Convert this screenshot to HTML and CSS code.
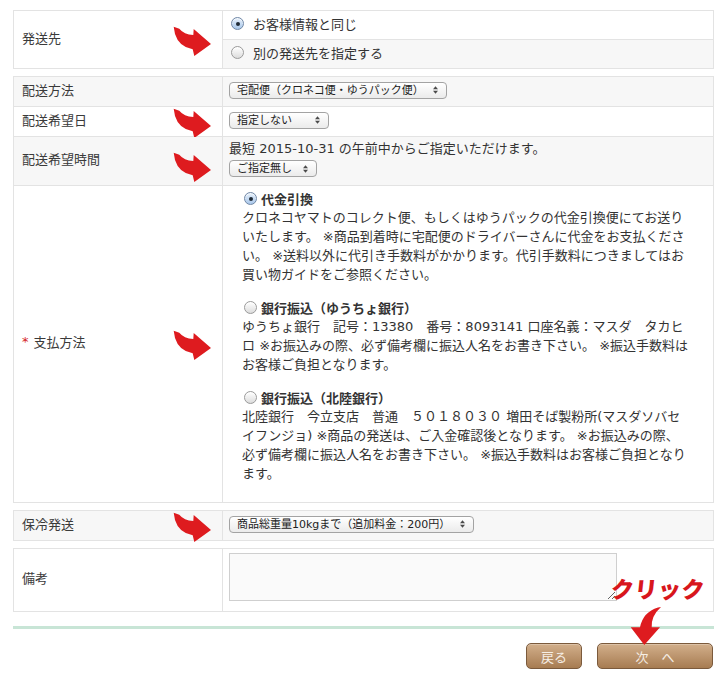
FILE: index.html
```html
<!DOCTYPE html>
<html lang="ja">
<head>
<meta charset="utf-8">
<title>配送・支払方法</title>
<link rel="stylesheet" href="styles.css">
</head>
<body>
<div class="page">

  <div class="box">
    <div class="label span2">発送先
      <svg class="pointer" viewBox="0 0 40 32" width="40" height="32"><path d="M2.7 1.7 L8.3 3.7 Q13 9.5 22.3 10 L22.7 4 L40 19 L23.3 31 L21.7 24.3 Q8 22 4 9 Z"/></svg>
    </div>
    <div class="value choice"><span class="radio checked"></span>お客様情報と同じ</div>
    <div class="value choice alt"><span class="radio"></span>別の発送先を指定する</div>
  </div>

  <div class="box">
    <div class="label alt">配送方法</div>
    <div class="value row alt"><span class="select w-method">宅配便（クロネコ便・ゆうパック便）<svg class="updown" viewBox="0 0 6 9" width="5" height="8"><path d="M0 3.5 L3 0 L6 3.5Z M0 5.5 L3 9 L6 5.5Z"/></svg></span></div>

    <div class="label">配送希望日
      <svg class="pointer" viewBox="0 0 40 32" width="40" height="32"><path d="M2.7 1.7 L8.3 3.7 Q13 9.5 22.3 10 L22.7 4 L40 19 L23.3 31 L21.7 24.3 Q8 22 4 9 Z"/></svg>
    </div>
    <div class="value row"><span class="select w-date">指定しない<svg class="updown" viewBox="0 0 6 9" width="5" height="8"><path d="M0 3.5 L3 0 L6 3.5Z M0 5.5 L3 9 L6 5.5Z"/></svg></span></div>

    <div class="label alt">配送希望時間
      <svg class="pointer low" viewBox="0 0 40 32" width="40" height="32"><path d="M2.7 1.7 L8.3 3.7 Q13 9.5 22.3 10 L22.7 4 L40 19 L23.3 31 L21.7 24.3 Q8 22 4 9 Z"/></svg>
    </div>
    <div class="value stack alt">
      <span class="note">最短 2015-10-31 の午前中からご指定いただけます。</span>
      <span class="select w-time">ご指定無し<svg class="updown" viewBox="0 0 6 9" width="5" height="8"><path d="M0 3.5 L3 0 L6 3.5Z M0 5.5 L3 9 L6 5.5Z"/></svg></span>
    </div>

    <div class="label"><span class="req">*</span>支払方法
      <svg class="pointer" viewBox="0 0 40 32" width="40" height="32"><path d="M2.7 1.7 L8.3 3.7 Q13 9.5 22.3 10 L22.7 4 L40 19 L23.3 31 L21.7 24.3 Q8 22 4 9 Z"/></svg>
    </div>
    <div class="value payment">
      <div class="pay-option">
        <div class="pay-title"><span class="radio checked"></span>代金引換</div>
        <p>クロネコヤマトのコレクト便、もしくはゆうパックの代金引換便にてお送り<br>いたします。 ※商品到着時に宅配便のドライバーさんに代金をお支払くださ<br>い。 ※送料以外に代引き手数料がかかります。代引手数料につきましてはお<br>買い物ガイドをご参照ください。</p>
      </div>
      <div class="pay-option">
        <div class="pay-title"><span class="radio"></span>銀行振込（ゆうちょ銀行）</div>
        <p>ゆうちょ銀行　記号：13380　番号：8093141 口座名義：マスダ　タカヒ<br>ロ ※お振込みの際、必ず備考欄に振込人名をお書き下さい。 ※振込手数料は<br>お客様ご負担となります。</p>
      </div>
      <div class="pay-option">
        <div class="pay-title"><span class="radio"></span>銀行振込（北陸銀行）</div>
        <p>北陸銀行　今立支店　普通　５０１８０３０ 増田そば製粉所(マスダソバセ<br>イフンジョ) ※商品の発送は、ご入金確認後となります。 ※お振込みの際、<br>必ず備考欄に振込人名をお書き下さい。 ※振込手数料はお客様ご負担となり<br>ます。</p>
      </div>
    </div>
  </div>

  <div class="box">
    <div class="label alt">保冷発送
      <svg class="pointer" viewBox="0 0 40 32" width="40" height="32"><path d="M2.7 1.7 L8.3 3.7 Q13 9.5 22.3 10 L22.7 4 L40 19 L23.3 31 L21.7 24.3 Q8 22 4 9 Z"/></svg>
    </div>
    <div class="value row alt"><span class="select w-cool">商品総重量10kgまで（追加料金：200円）<svg class="updown" viewBox="0 0 6 9" width="5" height="8"><path d="M0 3.5 L3 0 L6 3.5Z M0 5.5 L3 9 L6 5.5Z"/></svg></span></div>
  </div>

  <div class="box">
    <div class="label">備考</div>
    <div class="value notes"><textarea class="memo"></textarea></div>
  </div>

  <div class="rule"></div>

  <div class="actions">
    <button class="btn btn-back" type="button">戻る</button>
    <button class="btn btn-next" type="button">次　へ</button>
  </div>

  <div class="hint">クリック</div>
  <svg class="hint-arrow" viewBox="0 0 36 44" width="36" height="44"><path d="M33 3 L30 3.5 Q15 8 12 23.3 L2.7 23.3 L16.3 41 L32 23.3 L23.7 23.3 Q23 12 33 3 Z"/></svg>
</div>
</body>
</html>
```

FILE: styles.css
```css
body {
  margin: 10px 13px;
  background: #ffffff;
  color: #333333;
  font-family: "DejaVu Sans", "Noto Sans CJK JP", sans-serif;
  font-size: 13px;
  line-height: 17px;
}

.page {
  position: relative;
  width: 701px;
}

.box {
  display: grid;
  grid-template-columns: 209px 1fr;
  border-top: 1px solid #e3e3e3;
  border-left: 1px solid #e3e3e3;
  margin-bottom: 7px;
}

.box > div {
  box-sizing: border-box;
  border-right: 1px solid #e3e3e3;
  border-bottom: 1px solid #e3e3e3;
}

.alt {
  background: #f7f7f7;
}

.label {
  position: relative;
  display: flex;
  align-items: center;
  padding: 0 0 5px 8px;
  color: #3a3a3a;
  font-family: "Noto Sans CJK JP", sans-serif;
}

.span2 {
  grid-row: span 2;
}

.req {
  color: #d51d1d;
  margin-right: 5px;
  font-family: "DejaVu Sans", sans-serif;
}

.pointer {
  position: absolute;
  right: 11px;
  top: 50%;
  margin-top: -15px;
  fill: #de1b1f;
}

.pointer.low {
  margin-top: -10px;
}

.value {
  display: flex;
  align-items: center;
  padding: 0 6px;
}

.choice {
  height: 29px;
  padding: 0 6px 3px 8px;
  font-family: "Noto Sans CJK JP", sans-serif;
}

.row {
  height: 30px;
  padding-bottom: 3px;
}

.stack {
  flex-direction: column;
  align-items: flex-start;
  padding: 3px 6px 7px;
  height: 49px;
}

.stack .select {
  margin-top: 3px;
}

.radio {
  position: relative;
  display: inline-block;
  flex: none;
  box-sizing: border-box;
  width: 13px;
  height: 13px;
  border-radius: 50%;
  border: 1px solid #9a9a9a;
  background: linear-gradient(#ffffff, #dcdcdc);
  box-shadow: inset 0 1px 1px rgba(255, 255, 255, 0.8);
  margin-right: 9px;
}

.radio.checked {
  border-color: #6f87a6;
  background: linear-gradient(#e6f0fb, #a9c7ea);
}

.radio.checked::after {
  content: "";
  position: absolute;
  left: 3.5px;
  top: 3.5px;
  width: 4px;
  height: 4px;
  border-radius: 50%;
  background: #1f2a36;
}

.select {
  display: inline-flex;
  align-items: center;
  justify-content: space-between;
  box-sizing: border-box;
  height: 17px;
  padding: 0 8px 0 7px;
  border: 1px solid #a3a3a3;
  border-radius: 4px;
  background: linear-gradient(#ffffff, #ebebeb);
  color: #222222;
  font-size: 11px;
  line-height: 15px;
  white-space: nowrap;
}

.updown {
  fill: #4a4a4a;
  flex: none;
}

.w-method { width: 218px; }
.w-date { width: 100px; }
.w-time { width: 88px; }
.w-cool { width: 245px; }

.payment {
  display: block;
  padding: 3px 10px 19px 19px;
  line-height: 19px;
}

.pay-option + .pay-option {
  margin-top: 14px;
}

.pay-title {
  display: flex;
  align-items: center;
  font-weight: bold;
  font-family: "Noto Sans CJK JP", sans-serif;
}

.pay-title .radio {
  margin: 0 4px 0 2px;
}

.pay-option p {
  margin: 0;
  white-space: nowrap;
}

.notes {
  align-items: flex-start;
  height: 63px;
  padding: 4px 6px 10px;
}

.memo {
  display: block;
  box-sizing: border-box;
  width: 388px;
  height: 48px;
  margin: 0;
  border: 1px solid #cfcfcf;
  background: #fafafa;
}

.rule {
  height: 3px;
  margin-top: 14px;
  background: #c8e5d6;
}

.actions {
  display: flex;
  justify-content: flex-end;
  gap: 15px;
  margin-top: 14px;
  padding-right: 1px;
}

.btn {
  height: 26px;
  padding: 0;
  border: 1px solid #7b5a3c;
  border-radius: 5px;
  background: linear-gradient(#d2af8b, #a77c52);
  box-shadow: inset 0 1px 0 rgba(255, 255, 255, 0.25);
  color: #f6eee5;
  font-family: "Noto Sans CJK JP", sans-serif;
  font-size: 13px;
}

.btn-back { width: 56px; }
.btn-next { width: 116px; }

.hint {
  position: absolute;
  left: 598px;
  top: 567px;
  color: #d8161c;
  font-family: "Noto Sans CJK JP", sans-serif;
  font-weight: 900;
  font-size: 23px;
  line-height: 23px;
  letter-spacing: 0.5px;
  transform: skewX(-6deg);
  white-space: nowrap;
}

.hint-arrow {
  position: absolute;
  left: 615px;
  top: 594px;
  fill: #de1b1f;
}
```
